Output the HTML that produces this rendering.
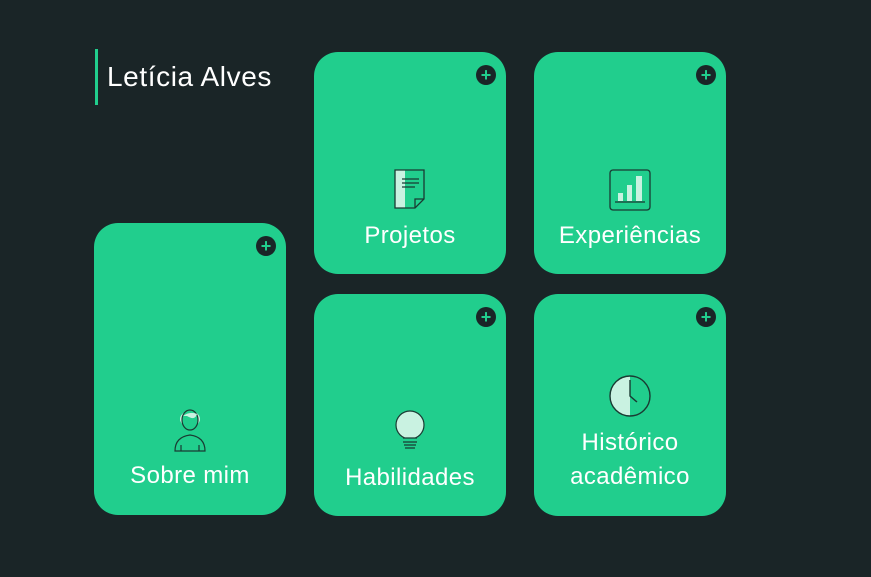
<!DOCTYPE html><html><head><style>
body{margin:0;width:871px;height:577px;background:#1a2527;font-family:"Liberation Sans",sans-serif;position:relative;overflow:hidden}
.t{position:absolute;left:95px;top:49px;height:56px;border-left:3px solid #21ce8d;padding-left:9px;color:#fff;font-size:28px;letter-spacing:0.6px;line-height:56px;margin-top:0}
.c{position:absolute;width:192px;background:#21ce8d;border-radius:24px;color:#fff;text-align:center;font-size:24px;letter-spacing:0.4px}
.p{position:absolute;right:10px;top:13px;width:20px;height:20px;border-radius:50%;background:#1a2527;color:#21ce8d;font-size:18px;line-height:20px;font-weight:bold;letter-spacing:0}
.l{position:absolute;left:0;right:0;line-height:34px}
svg{position:absolute;left:50%;transform:translateX(-50%)}
</style></head><body>
<div class="t">Letícia Alves</div>
<div class="c" style="left:314px;top:52px;height:222px"><div class="p">+</div>
<svg style="top:116px" width="34" height="44" viewBox="0 0 34 44"><rect x="2" y="2" width="10" height="38" fill="#c9f2e1"/><path d="M2 2H31V31L22 40H2Z" fill="none" stroke="#1a3a32" stroke-width="1.3"/><path d="M22 40V31H31" fill="none" stroke="#1a3a32" stroke-width="1.3"/><path d="M9 11H26M9 15H26M9 19H22" stroke="#1a3a32" stroke-width="1.3"/></svg>
<div class="l" style="top:167px">Projetos</div></div>
<div class="c" style="left:534px;top:52px;height:222px"><div class="p">+</div>
<svg style="top:116px" width="44" height="44" viewBox="0 0 44 44"><rect x="2" y="2" width="40" height="40" rx="3" fill="none" stroke="#1a3a32" stroke-width="1.3"/><rect x="10" y="25" width="5" height="8" fill="#c9f2e1"/><rect x="19" y="17" width="5" height="16" fill="#c9f2e1"/><rect x="28" y="8" width="6" height="25" fill="#c9f2e1"/><path d="M7 34H37" stroke="#1a3a32" stroke-width="1.3"/></svg>
<div class="l" style="top:167px">Experiências</div></div>
<div class="c" style="left:94px;top:223px;height:292px"><div class="p">+</div>
<svg style="top:186px" width="34" height="44" viewBox="0 0 34 44"><ellipse cx="17" cy="10" rx="10" ry="8" fill="#c9f2e1"/><ellipse cx="17" cy="11" rx="8" ry="10" fill="#21ce8d" stroke="#1a3a32" stroke-width="1.2"/><path d="M10 7Q17 2 24 5Q22 12 14 7" fill="#c9f2e1"/><path d="M2 42Q2 28 17 26Q32 28 32 42Z M8 36V42M26 36V42" fill="none" stroke="#1a3a32" stroke-width="1.2"/></svg>
<div class="l" style="top:236px">Sobre mim</div></div>
<div class="c" style="left:314px;top:294px;height:222px"><div class="p">+</div>
<svg style="top:114px" width="34" height="44" viewBox="0 0 34 44"><circle cx="17" cy="17" r="14" fill="#c9f2e1" stroke="#1a3a32" stroke-width="1.2"/><path d="M9 30H25V40H9Z" fill="#21ce8d"/><path d="M10 30H24M10 34H24M11 37H23M12 40H22" stroke="#1a3a32" stroke-width="1.2"/></svg>
<div class="l" style="top:167px">Habilidades</div></div>
<div class="c" style="left:534px;top:294px;height:222px"><div class="p">+</div>
<svg style="top:80px" width="44" height="44" viewBox="0 0 44 44"><circle cx="22" cy="22" r="20" fill="#21ce8d"/><path d="M22 2A20 20 0 0 0 22 42Z" fill="#c9f2e1"/><circle cx="22" cy="22" r="20" fill="none" stroke="#1a3a32" stroke-width="1.4"/><path d="M22 6V22L29 28" fill="none" stroke="#1a3a32" stroke-width="1.4"/></svg>
<div class="l" style="top:132px">Histórico<br>acadêmico</div></div>
</body></html>
